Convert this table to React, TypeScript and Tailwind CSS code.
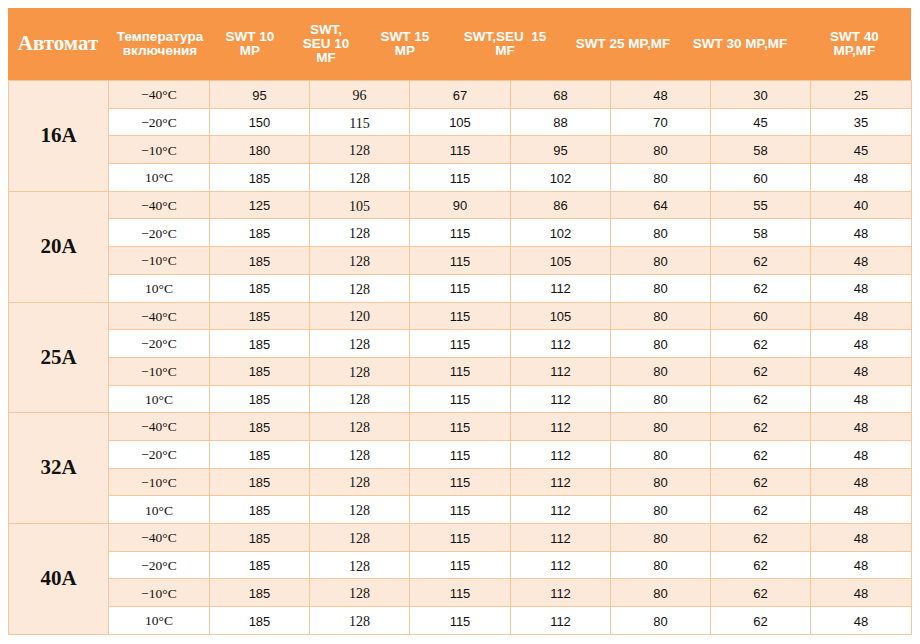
const temps = ["−40°C", "−20°C", "−10°C", "10°C"];

const full = [185, 128, 115, 112, 80, 62, 48];

const groups: { amp: string; rows: number[][] }[] = [
  {
    amp: "16A",
    rows: [
      [95, 96, 67, 68, 48, 30, 25],
      [150, 115, 105, 88, 70, 45, 35],
      [180, 128, 115, 95, 80, 58, 45],
      [185, 128, 115, 102, 80, 60, 48],
    ],
  },
  {
    amp: "20A",
    rows: [
      [125, 105, 90, 86, 64, 55, 40],
      [185, 128, 115, 102, 80, 58, 48],
      [185, 128, 115, 105, 80, 62, 48],
      [185, 128, 115, 112, 80, 62, 48],
    ],
  },
  {
    amp: "25A",
    rows: [[185, 120, 115, 105, 80, 60, 48], full, full, full],
  },
  { amp: "32A", rows: [full, full, full, full] },
  { amp: "40A", rows: [full, full, full, full] },
];

const serif = "font-['Liberation_Serif',Cambria,serif]";
const sans = "font-['Liberation_Sans',Arial,sans-serif]";

function HeadCell({ w, children }: { w: string; children: React.ReactNode }) {
  return (
    <div className={`${w} flex items-center justify-center text-center text-white font-bold text-[13.5px] leading-[14px] ${sans}`}>
      {children}
    </div>
  );
}

export default function App() {
  return (
    <div className="bg-white p-2 w-[920px] h-[644px]">
      <div className="w-[903px]">
        <div className="flex h-[72px] bg-[#f79646]">
          <div className={`w-[100px] flex items-center justify-center text-white font-bold text-[21px] ${serif}`}>
            Автомат
          </div>
          <HeadCell w="w-[104px]">
            Температура
            <br />
            включения
          </HeadCell>
          <HeadCell w="w-[76px]">
            SWT 10
            <br />
            MP
          </HeadCell>
          <HeadCell w="w-[76px]">
            SWT,
            <br />
            SEU 10
            <br />
            MF
          </HeadCell>
          <HeadCell w="w-[82px]">
            SWT 15
            <br />
            MP
          </HeadCell>
          <HeadCell w="w-[118px]">
            SWT,SEU&nbsp;&nbsp;15
            <br />
            MF
          </HeadCell>
          <HeadCell w="w-[118px]">SWT 25 MP,MF</HeadCell>
          <HeadCell w="w-[116px]">SWT 30 MP,MF</HeadCell>
          <HeadCell w="w-[113px]">
            SWT 40
            <br />
            MP,MF
          </HeadCell>
        </div>
        <table className="w-[903px] table-fixed border-collapse text-[#111]">
          <colgroup>
            <col className="w-[100px]" />
            <col className="w-[101px]" />
            <col className="w-[100px]" />
            <col className="w-[100px]" />
            <col className="w-[101px]" />
            <col className="w-[100px]" />
            <col className="w-[100px]" />
            <col className="w-[100px]" />
            <col className="w-[101px]" />
          </colgroup>
          <tbody>
            {groups.map((g) =>
              g.rows.map((vals, i) => (
                <tr key={g.amp + i} className={i % 2 === 0 ? "bg-[#fde9d9]" : "bg-white"}>
                  {i === 0 && (
                    <td
                      rowSpan={4}
                      className={`bg-[#fde9d9] border border-[#f7c69c] text-center font-bold text-[21px] ${serif}`}
                    >
                      {g.amp}
                    </td>
                  )}
                  <td className={`h-[27.7px] p-0 pt-[2px] border border-[#f7c69c] text-center text-[13.5px] ${serif}`}>
                    {temps[i]}
                  </td>
                  {vals.map((v, j) => (
                    <td
                      key={j}
                      className={`p-0 pt-[2px] border border-[#f7c69c] text-center ${
                        j === 1 ? `text-[14px] ${serif}` : `text-[13px] ${sans}`
                      }`}
                    >
                      {v}
                    </td>
                  ))}
                </tr>
              ))
            )}
          </tbody>
        </table>
      </div>
    </div>
  );
}
